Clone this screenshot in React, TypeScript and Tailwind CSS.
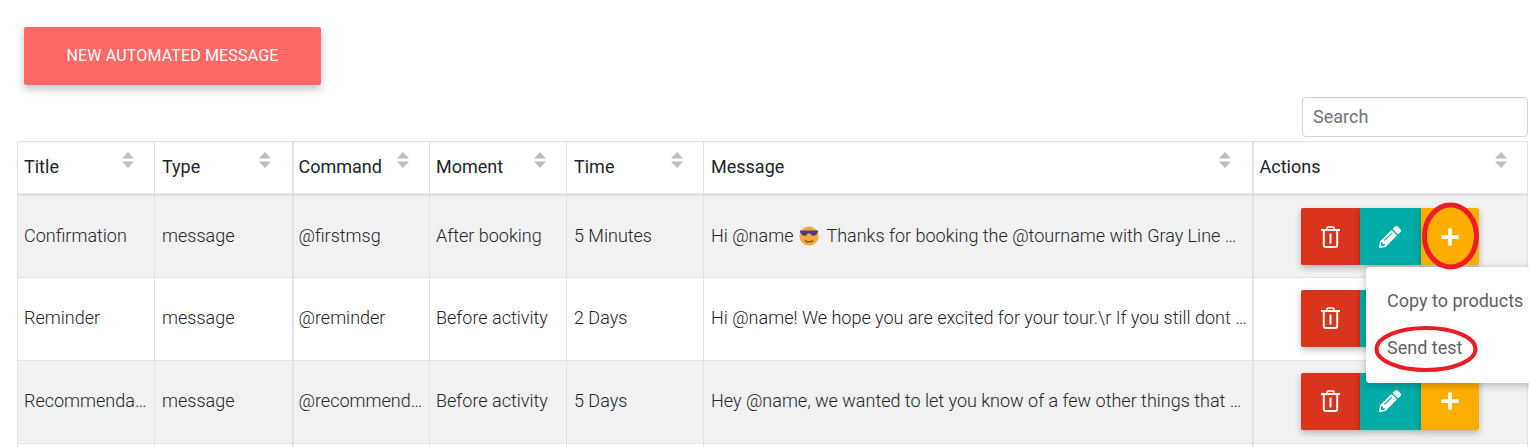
import { FaPencilAlt, FaPlus } from 'react-icons/fa';

const columns = [
  { label: 'Title', width: 'w-[137px]', pad: 'pl-[6px]', line: 'border-l' },
  { label: 'Type', width: 'w-[138px]', pad: 'pl-[7px]', line: 'border-l' },
  { label: 'Command', width: 'w-[137px]', pad: 'pl-[5px]', line: 'border-l-2' },
  { label: 'Moment', width: 'w-[137px]', pad: 'pl-[6px]', line: 'border-l' },
  { label: 'Time', width: 'w-[137px]', pad: 'pl-[7px]', line: 'border-l' },
  { label: 'Message', width: 'w-[549px]', pad: 'pl-[7px]', line: 'border-l' },
  { label: 'Actions', width: 'w-[275px]', pad: 'pl-[6px]', line: 'border-l-2' },
];

const rows = [
  {
    title: 'Confirmation',
    type: 'message',
    command: '@firstmsg',
    moment: 'After booking',
    time: '5 Minutes',
    before: 'Hi @name',
    emoji: true,
    message: 'Thanks for booking the @tourname with Gray Line Washington and we hope you enjoy it',
  },
  {
    title: 'Reminder',
    type: 'message',
    command: '@reminder',
    moment: 'Before activity',
    time: '2 Days',
    before: '',
    emoji: false,
    message: 'Hi @name! We hope you are excited for your tour.\\r If you still dont have your tickets',
  },
  {
    title: 'Recommendation',
    type: 'message',
    command: '@recommendation',
    moment: 'Before activity',
    time: '5 Days',
    before: '',
    emoji: false,
    message: 'Hey @name, we wanted to let you know of a few other things that you could do here',
  },
];

function SortArrows() {
  return (
    <svg viewBox="0 0 12 16" className="absolute right-[20.5px] top-[10px] h-[16px] w-[12px]">
      <path d="M6 0 L12 6.5 H0 Z" fill="#bdbdbd" />
      <path d="M6 16 L12 9.5 H0 Z" fill="#bdbdbd" />
    </svg>
  );
}

function CoolEmoji() {
  return (
    <svg viewBox="0 0 20 20" className="ml-[6px] mr-[7px] inline-block h-[20px] w-[20px] align-[-4px]">
      <circle cx="10" cy="10" r="9.6" fill="#f5a83c" />
      <path d="M1 4.5 H19 V6.5 L18 7 C17.6 10.2 12.6 11 11.4 7.4 H8.6 C7.4 11 2.4 10.2 2 7 L1 6.5 Z" fill="#4f3a86" />
      <path d="M6 14.5 C8 16.4 12 16.4 14 14.5" stroke="#7a4a14" strokeWidth="1.3" fill="none" />
    </svg>
  );
}

function TrashIcon() {
  return (
    <svg viewBox="0 0 19 22" className="h-[22px] w-[19px]" fill="none" stroke="#fff">
      <path d="M6 4 V2 Q6 1 7 1 H12 Q13 1 13 2 V4" strokeWidth="1.6" />
      <path d="M0.5 4 H18.5" strokeWidth="2" strokeLinecap="round" />
      <path d="M2.8 4 V19 Q2.8 21 4.8 21 H14.2 Q16.2 21 16.2 19 V4" strokeWidth="2" />
      <path d="M9.5 7.5 V17.5" strokeWidth="2" />
    </svg>
  );
}

function ActionButtons() {
  return (
    <div className="flex justify-center pr-[2px]">
      <div className="flex h-[57px] w-[59px] items-center justify-center rounded-l-[2px] bg-[#d9341c] text-white shadow-[0_3px_6px_rgba(0,0,0,0.25)]">
        <TrashIcon />
      </div>
      <div className="flex h-[57px] w-[61px] items-center justify-center bg-[#00aca8] text-white shadow-[0_3px_6px_rgba(0,0,0,0.25)]">
        <FaPencilAlt size={22} />
      </div>
      <div className="flex h-[57px] w-[58px] items-center justify-center rounded-r-[2px] bg-[#ffae00] text-white shadow-[0_3px_6px_rgba(0,0,0,0.25)]">
        <FaPlus size={20} />
      </div>
    </div>
  );
}

export default function App() {
  return (
    <div className="relative h-[447px] w-[1529px] overflow-hidden bg-white font-['Roboto',sans-serif] text-[#212529]">
      <div className="pl-[24px] pt-[27px]">
        <button className="h-[58px] w-[297px] rounded-[2px] bg-[#ff6966] text-[16px] tracking-[0.15px] text-white shadow-[0_4px_8px_rgba(0,0,0,0.25)]">
          NEW AUTOMATED MESSAGE
        </button>
      </div>

      <div className="flex justify-end pr-[1px] pt-[12px]">
        <input
          placeholder="Search"
          className="h-[40px] w-[226px] rounded-[4px] border border-[#ced4da] px-[10px] pb-[2px] text-[18px] outline-none placeholder:text-[#6c757d]"
        />
      </div>

      <table className="ml-[17px] mt-[4px] w-[1510px] table-fixed border-collapse text-[18px]">
        <thead>
          <tr className="h-[53px]">
            {columns.map((col) => (
              <th
                key={col.label}
                className={`relative border-y border-r border-b-[3px] border-[#dee2e6] pb-[3px] pr-[5px] text-left font-normal ${col.line} ${col.pad} ${col.width}`}
              >
                {col.label}
                <SortArrows />
              </th>
            ))}
          </tr>
        </thead>
        <tbody className="font-light">
          {rows.map((row, i) => (
            <tr key={row.title} className={`h-[83px] ${i % 2 === 0 ? 'bg-[#f1f1f2]' : 'bg-white'}`}>
              <td className={`truncate border-y border-r border-[#dee2e6] pr-[5px] ${i > 0 ? 'pb-[4px]' : 'pb-[2px]'} ${columns[0].line} ${columns[0].pad}`}>{row.title}</td>
              <td className={`truncate border-y border-r border-[#dee2e6] pr-[5px] ${i > 0 ? 'pb-[4px]' : 'pb-[2px]'} ${columns[1].line} ${columns[1].pad}`}>{row.type}</td>
              <td className={`truncate border-y border-r border-[#dee2e6] pr-[5px] ${i > 0 ? 'pb-[4px]' : 'pb-[2px]'} ${columns[2].line} ${columns[2].pad}`}>{row.command}</td>
              <td className={`truncate border-y border-r border-[#dee2e6] pr-[5px] ${i > 0 ? 'pb-[4px]' : 'pb-[2px]'} ${columns[3].line} ${columns[3].pad}`}>{row.moment}</td>
              <td className={`truncate border-y border-r border-[#dee2e6] pr-[5px] ${i > 0 ? 'pb-[4px]' : 'pb-[2px]'} ${columns[4].line} ${columns[4].pad}`}>{row.time}</td>
              <td className={`truncate border-y border-r border-[#dee2e6] pr-[4px] ${i > 0 ? 'pb-[4px]' : 'pb-[2px]'} ${columns[5].line} ${columns[5].pad}`}>
                {row.before}
                {row.emoji && <CoolEmoji />}
                {row.message}
              </td>
              <td className={`border-y border-r border-[#dee2e6] pr-[5px] ${i > 0 ? 'pb-[2px]' : ''} ${columns[6].line} ${columns[6].pad}`}>
                <ActionButtons />
              </td>
            </tr>
          ))}
          <tr className="h-[83px] bg-white">
            {columns.map((col) => (
              <td key={col.label} className={`border-y border-r border-[#dee2e6] ${col.line}`} />
            ))}
          </tr>
        </tbody>
      </table>

      {/* dropdown opened from the plus button */}
      <div className="absolute left-[1366px] top-[267px] flex h-[116px] w-[190px] flex-col gap-[20px] rounded-[4px] bg-white pl-[21px] pt-[20px] text-[18px] text-[#5f6368] shadow-[0_2px_8px_rgba(0,0,0,0.25)]">
        <span>Copy to products</span>
        <span>Send test</span>
      </div>

      {/* red annotation rings */}
      <svg className="absolute left-[1410px] top-[195px] h-[80px] w-[80px]" viewBox="0 0 80 80">
        <ellipse cx="40.5" cy="41" rx="26" ry="31" fill="none" stroke="#ed1c24" strokeWidth="5" />
      </svg>
      <svg className="absolute left-[1370px] top-[320px] h-[60px] w-[110px]" viewBox="0 0 110 60">
        <ellipse cx="56" cy="29" rx="49.5" ry="21" fill="none" stroke="#ed1c24" strokeWidth="4" />
      </svg>
    </div>
  );
}
